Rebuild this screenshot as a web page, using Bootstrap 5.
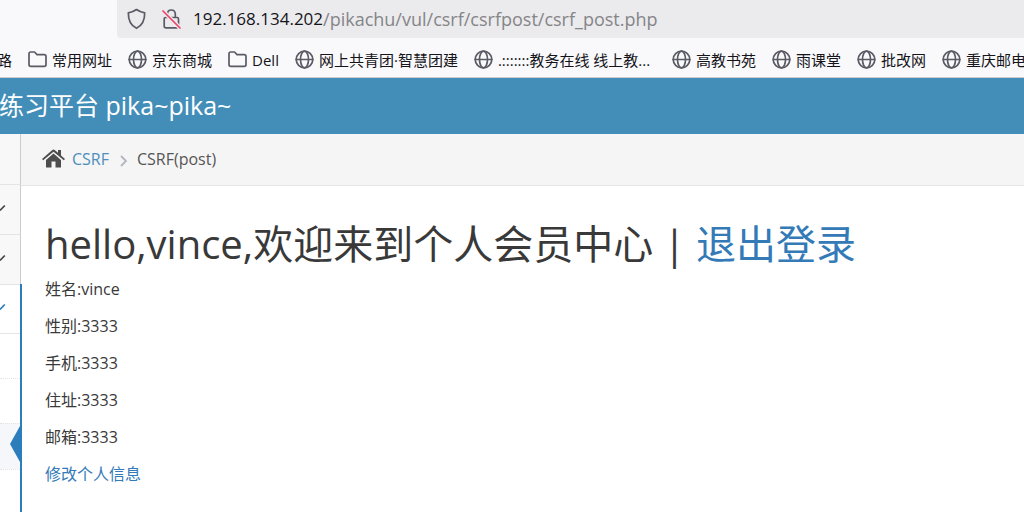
<!DOCTYPE html>
<html lang="zh-CN">
<head>
<meta charset="utf-8">
<meta name="viewport" content="width=device-width, initial-scale=1">
<title>CSRF(post)</title>
<link href="https://cdn.jsdelivr.net/npm/bootstrap@5.3.0/dist/css/bootstrap.min.css" rel="stylesheet">
<style>
body { font-family: "Open Sans", "Noto Sans CJK SC", sans-serif; font-size: 16px; line-height: 24px; color: #393939; background: #fff; }
a { color: #337ab7; text-decoration: none; }
.browser-bar { background: #f9f9fb; border-bottom: 1px solid #ccc; }
.url-box { margin-left: 117px; height: 38px; padding-left: 10px; background: #ebebed; border-radius: 0 0 0 4px; font-size: 18px; }
.url-host { color: #15141a; margin-left: 12px; font-size: 17px; }
.url-path { color: #858588; }
.bookmarks { height: 39px; padding-top: 4px; gap: 16px; margin-left: -3px; font-size: 15px; }
.bookmarks a { color: #15141a; gap: 5px; }
.bookmarks .wide-mark { width: 182px; }
.line-icon { fill: none; stroke: #5b5b66; stroke-width: 1.7; stroke-linejoin: round; stroke-linecap: round; }
.brand-bar { background: #438eb9; height: 56px; }
.brand-bar a { color: #fff; font-size: 25px; line-height: 32px; margin-left: -1px; padding-bottom: 2px; }
.side { width: 21px; background: #fff; }
.side-top, .side-item { height: 50px; background: #f8f8f8; border-right: 1px solid #ccc; }
.side-item { border-top: 1px solid #e5e5e5; padding-bottom: 4px; color: #444; }
.side-open { border-right: 2px solid #2b7dbc; margin-right: -1px; }
.side-open .side-item { height: 49px; background: #fff; border-right: 0; color: #2b7dbc; }
.side-sub { height: 45px; border-top: 1px dotted #e4e4e4; }
.side-sub.first { border-top: 1px solid #e5e5e5; }
.side-sub.current { height: 46px; background: #f5f7fa; padding-bottom: 5px; }
.crumbs { height: 52px; padding: 0 21px 2px; background: #f5f5f5; border-bottom: 1px solid #e5e5e5; }
.crumbs a { color: #4c8fbd; margin-left: 7px; }
.crumbs span { color: #555; }
.page-body { padding: 33px 24px; }
.page-body h1 { font-size: 40px; line-height: 50px; margin-bottom: 8px; font-weight: 400; }
.page-body p { margin-bottom: 13px; }
</style>
</head>
<body class="d-flex flex-column vh-100 overflow-hidden">
<svg width="0" height="0" class="position-absolute" aria-hidden="true">
  <symbol id="globe" viewBox="0 0 19 19"><circle cx="9.500" cy="9.500" r="8.300"/><ellipse cx="9.500" cy="9.500" rx="4" ry="8.300"/><path d="M1.200 9.500h16.600"/></symbol>
  <symbol id="folder" viewBox="0 0 19 19"><path d="M1 14.500V3.800Q1 2 2.800 2H6.500L9 4.600H16.200Q18 4.600 18 6.400V14.500Q18 16.400 16.200 16.400H2.800Q1 16.400 1 14.500Z"/></symbol>
  <symbol id="down" viewBox="0 0 6 10"><path d="M0 7.500L4.800 2.500" fill="none" stroke="currentColor" stroke-width="1.700"/></symbol>
</svg>
<header class="browser-bar">
  <div class="url-box d-flex align-items-center text-nowrap">
    <svg class="line-icon" width="19" height="22" viewBox="0 0 19 22"><path d="M9.500 1.500C7.200 3.200 4.500 4.300 1.300 4.800C1.200 11.800 3.200 17.300 9.500 20.300C15.800 17.300 17.800 11.800 17.700 4.800C14.500 4.300 11.800 3.200 9.500 1.500Z"/></svg>
    <svg class="line-icon ms-3" width="19" height="22" viewBox="0 0 19 22"><path d="M5.500 9V6Q5.500 2 9.300 2T13.300 6V9M3.500 9.500H15.200Q16.500 9.500 16.500 11V18Q16.500 19.800 14.800 19.800H4Q2.200 19.800 2.200 18V11Q2.200 9.500 3.500 9.500Z"/><path d="M1.500 3.500L17.500 19.500" stroke="#ebebed" stroke-width="4"/><path d="M1 3L18 20" stroke="#f0436a"/></svg>
    <span class="url-host">192.168.134.202</span><span class="url-path">/pikachu/vul/csrf/csrfpost/csrf_post.php</span>
  </div>
  <nav class="bookmarks d-flex align-items-center text-nowrap" aria-label="书签">
    <a href="#" class="flex-shrink-0">路</a>
    <a href="#" class="d-flex align-items-center flex-shrink-0"><svg class="line-icon" width="19" height="19"><use href="#folder"/></svg>常用网址</a>
    <a href="#" class="d-flex align-items-center flex-shrink-0"><svg class="line-icon" width="19" height="19"><use href="#globe"/></svg>京东商城</a>
    <a href="#" class="d-flex align-items-center flex-shrink-0"><svg class="line-icon" width="19" height="19"><use href="#folder"/></svg>Dell</a>
    <a href="#" class="d-flex align-items-center flex-shrink-0"><svg class="line-icon" width="19" height="19"><use href="#globe"/></svg>网上共青团·智慧团建</a>
    <a href="#" class="wide-mark d-flex align-items-center flex-shrink-0"><svg class="line-icon" width="19" height="19"><use href="#globe"/></svg>.:::::::教务在线 线上教...</a>
    <a href="#" class="d-flex align-items-center flex-shrink-0"><svg class="line-icon" width="19" height="19"><use href="#globe"/></svg>高教书苑</a>
    <a href="#" class="d-flex align-items-center flex-shrink-0"><svg class="line-icon" width="19" height="19"><use href="#globe"/></svg>雨课堂</a>
    <a href="#" class="d-flex align-items-center flex-shrink-0"><svg class="line-icon" width="19" height="19"><use href="#globe"/></svg>批改网</a>
    <a href="#" class="d-flex align-items-center flex-shrink-0"><svg class="line-icon" width="19" height="19"><use href="#globe"/></svg>重庆邮电</a>
  </nav>
</header>
<div class="brand-bar d-flex align-items-center flex-shrink-0"><a href="#">练习平台 pika~pika~</a></div>
<div class="d-flex flex-grow-1">
  <aside class="side d-flex flex-column flex-shrink-0">
    <div class="side-top"></div>
    <div class="side-item d-flex align-items-center"><svg width="6" height="10"><use href="#down"/></svg></div>
    <div class="side-item d-flex align-items-center"><svg width="6" height="10"><use href="#down"/></svg></div>
    <div class="side-open flex-grow-1">
      <div class="side-item d-flex align-items-center"><svg width="6" height="10"><use href="#down"/></svg></div>
      <div class="side-sub first"></div>
      <div class="side-sub"></div>
      <div class="side-sub current d-flex align-items-center justify-content-end"><svg width="10" height="36" viewBox="0 0 10 36"><path d="M10 0V36L0 18Z" fill="#2b7dbc"/></svg></div>
      <div class="side-sub"></div>
    </div>
  </aside>
  <main class="flex-grow-1">
    <nav class="crumbs d-flex align-items-center" aria-label="breadcrumb">
      <svg width="23" height="19" viewBox="0 0 23 19" fill="#4d4d4d"><path d="M11.500 4.500L4 11V18Q4 18.500 4.500 18.500H9.500V12.500H13.500V18.500H18.500Q19 18.500 19 18V11Z"/><path d="M0 10L10.300 1Q11.500 0 12.700 1L16 3.800V1H19V6.500L23 10L21.800 11.300L11.500 2.800L1.200 11.300Z"/></svg>
      <a href="#">CSRF</a>
      <svg class="mx-2 mt-1" width="12" height="12" viewBox="0 0 12 12" fill="none" stroke="#b2b6bf" stroke-width="1.800"><path d="M4 1L9 6L4 11"/></svg>
      <span>CSRF(post)</span>
    </nav>
    <section class="page-body">
      <h1>hello,vince,欢迎来到个人会员中心 | <a href="#">退出登录</a></h1>
      <p>姓名:vince</p>
      <p>性别:3333</p>
      <p>手机:3333</p>
      <p>住址:3333</p>
      <p>邮箱:3333</p>
      <a href="#">修改个人信息</a>
    </section>
  </main>
</div>
<script src="https://cdn.jsdelivr.net/npm/bootstrap@5.3.0/dist/js/bootstrap.bundle.min.js"></script>
</body>
</html>
